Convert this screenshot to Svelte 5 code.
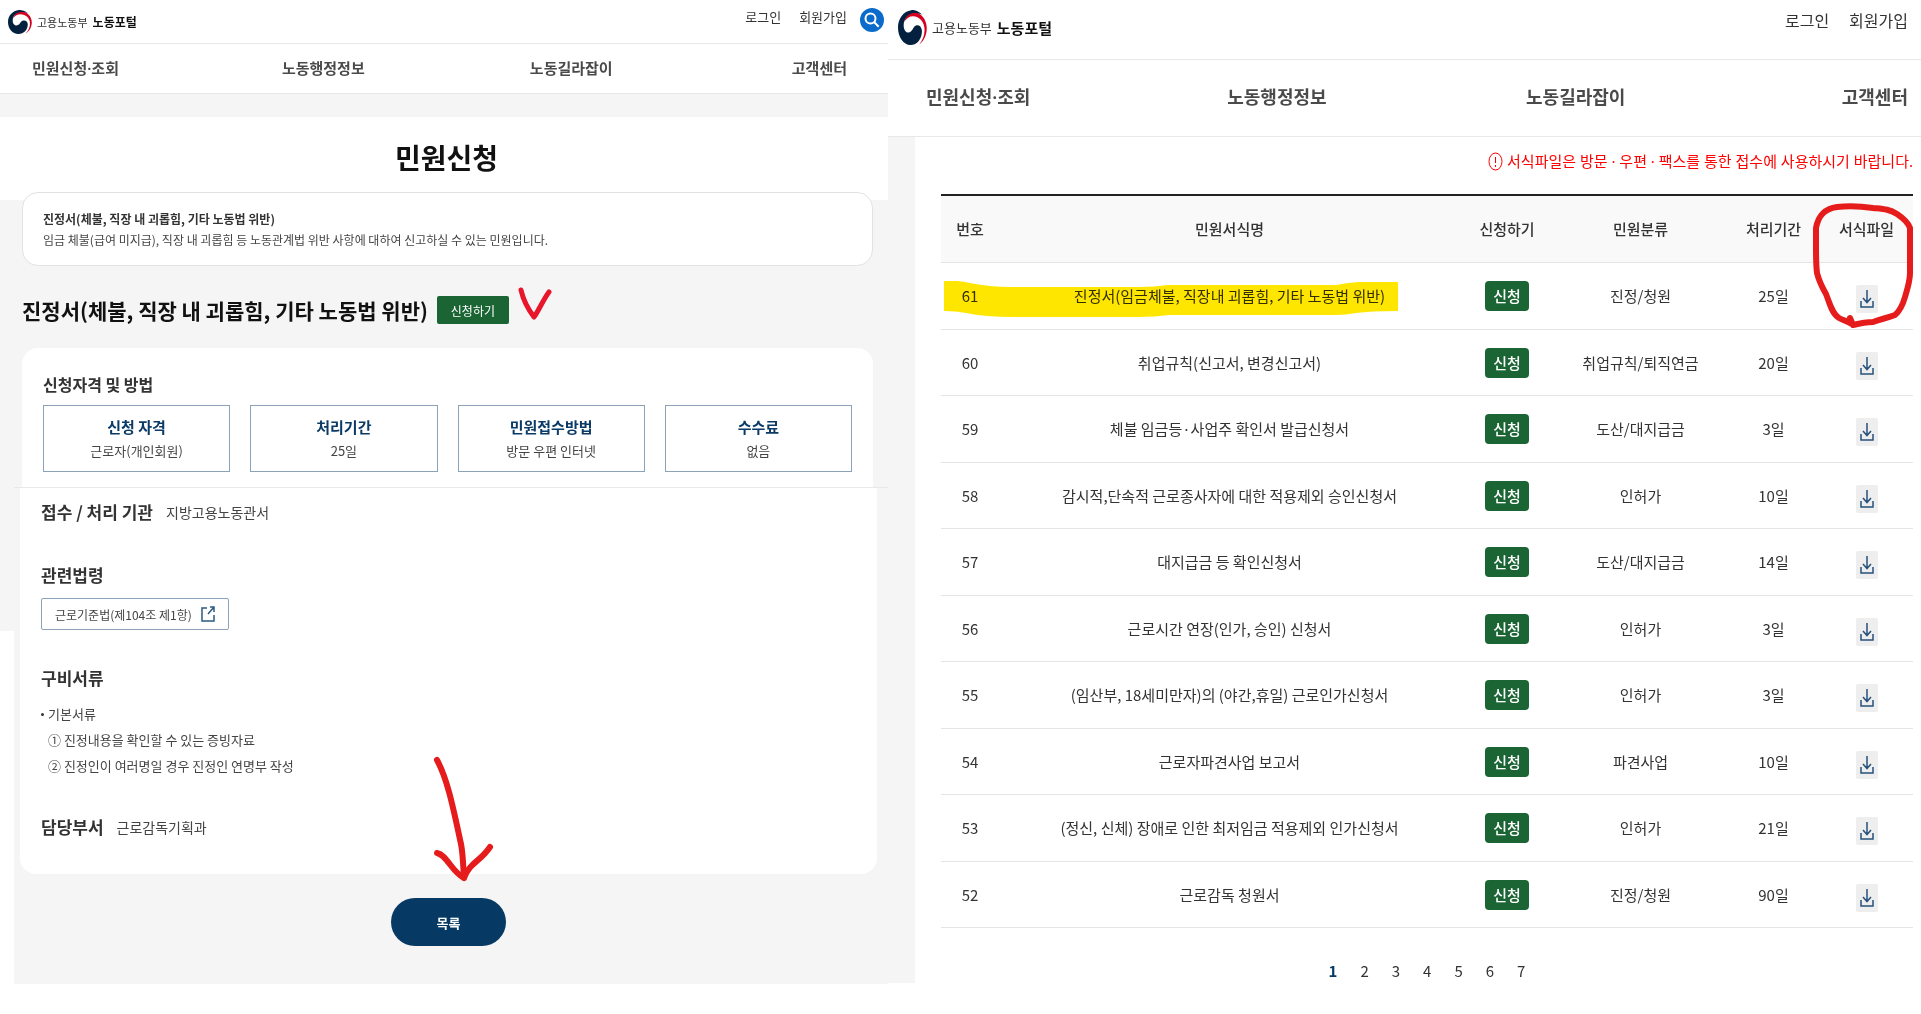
<script lang="ts">
  interface FormRow {
    no: number;
    name: string;
    category: string;
    days: string;
  }

  const menus = ['민원신청·조회', '노동행정정보', '노동길라잡이', '고객센터'];

  const conditions = [
    { label: '신청 자격', value: '근로자(개인회원)' },
    { label: '처리기간', value: '25일' },
    { label: '민원접수방법', value: '방문 우편 인터넷' },
    { label: '수수료', value: '없음' },
  ];

  const rows: FormRow[] = [
    { no: 61, name: '진정서(임금체불, 직장내 괴롭힘, 기타 노동법 위반)', category: '진정/청원', days: '25일' },
    { no: 60, name: '취업규칙(신고서, 변경신고서)', category: '취업규칙/퇴직연금', days: '20일' },
    { no: 59, name: '체불 임금등·사업주 확인서 발급신청서', category: '도산/대지급금', days: '3일' },
    { no: 58, name: '감시적,단속적 근로종사자에 대한 적용제외 승인신청서', category: '인허가', days: '10일' },
    { no: 57, name: '대지급금 등 확인신청서', category: '도산/대지급금', days: '14일' },
    { no: 56, name: '근로시간 연장(인가, 승인) 신청서', category: '인허가', days: '3일' },
    { no: 55, name: '(임산부, 18세미만자)의 (야간,휴일) 근로인가신청서', category: '인허가', days: '3일' },
    { no: 54, name: '근로자파견사업 보고서', category: '파견사업', days: '10일' },
    { no: 53, name: '(정신, 신체) 장애로 인한 최저임금 적용제외 인가신청서', category: '인허가', days: '21일' },
    { no: 52, name: '근로감독 청원서', category: '진정/청원', days: '90일' },
  ];

  const pages = [1, 2, 3, 4, 5, 6, 7];
  let page = $state(1);
</script>

{#snippet logo()}
  <a href="#home" class="logo">
    <svg class="logo-mark" viewBox="0 0 24 24" preserveAspectRatio="none" aria-hidden="true">
      <path fill="#d5001f" d="M5.2 8C6.5 4 9.5 1.6 13 1.6c6 0 10.8 4.9 10.8 10.9 0 5-2.8 9-6.2 11.1 2.7-2.8 4.4-6.1 4.4-10.1 0-5.5-4.5-9.3-9.5-9.3-3 0-5.5 1.3-7.3 3.8Z" />
      <path fill="#03203f" d="M20 3.3C17 .6 13-.1 11 .1 4.5.7 0 5.9 0 12c0 6.6 4.5 12 10.3 12 5.7 0 9.5-4.5 9.5-9.5 0-3-2.5-4.5-4.8-3.9-2.8.7-3 4.8-6.4 4.8-2.6 0-3.900-2.400-3.900-5 0-4.400 3.800-8.200 8.300-8.400 2.500-.1 5 .3 7 1.300Z" />
    </svg>
    <span class="logo-org">고용노동부</span>
    <strong class="logo-name">노동포털</strong>
  </a>
{/snippet}

{#snippet menu()}
  <nav class="menu" aria-label="주 메뉴">
    {#each menus as item}
      <a href="#menu">{item}</a>
    {/each}
  </nav>
{/snippet}

<div class="page">
  <section class="panel detail">
    <header class="top">
      {@render logo()}
      <div class="util">
        <a href="#login">로그인</a>
        <a href="#join">회원가입</a>
      </div>
      <button class="search" aria-label="검색">
        <svg viewBox="0 0 24 24" aria-hidden="true">
          <circle cx="10.5" cy="10.5" r="5" />
          <path d="m14.3 14.3 4.4 4.4" />
        </svg>
      </button>
    </header>
    {@render menu()}

    <div class="title-band">
      <h1>민원신청</h1>
    </div>

    <div class="intro">
      <strong>진정서(체불, 직장 내 괴롭힘, 기타 노동법 위반)</strong>
      <p>임금 체불(급여 미지급), 직장 내 괴롭힘 등 노동관계법 위반 사항에 대하여 신고하실 수 있는 민원입니다.</p>
    </div>

    <div class="heading">
      <h2>진정서(체불, 직장 내 괴롭힘, 기타 노동법 위반)</h2>
      <button class="apply">신청하기</button>
      <svg class="check" viewBox="0 0 36 36" aria-hidden="true">
        <path d="M4 5c2 9 7 19 13 27C21 27 26 15 32 7" />
      </svg>
    </div>

    <div class="card card-top">
      <h3>신청자격 및 방법</h3>
      <dl class="conditions">
        {#each conditions as item}
          <div>
            <dt>{item.label}</dt>
            <dd>{item.value}</dd>
          </div>
        {/each}
      </dl>
    </div>

    <div class="lower">
      <div class="card card-bottom">
        <div class="field">
          <h3>접수 / 처리 기관</h3>
          <span>지방고용노동관서</span>
        </div>

        <h3 class="law-title">관련법령</h3>
        <a href="#law" class="law">
          근로기준법(제104조 제1항)
          <svg viewBox="0 0 14 16" aria-hidden="true">
            <path d="M6 2H1v13h12V9M9 1h4v5M13 1 7 8" />
          </svg>
        </a>

        <h3 class="docs-title">구비서류</h3>
        <div class="docs">
          <p class="docs-kind">기본서류</p>
          <p>① 진정내용을 확인할 수 있는 증빙자료</p>
          <p>② 진정인이 여러명일 경우 진정인 연명부 작성</p>
        </div>

        <div class="field dept">
          <h3>담당부서</h3>
          <span>근로감독기획과</span>
        </div>
      </div>

      <div class="actions">
        <button class="list-btn">목록</button>
        <svg class="arrow" viewBox="0 0 64 128" aria-hidden="true">
          <path d="M7 6c11 20 17 52 24 84 2 10 2 20 3 34M7 99c10 2 14 18 27 25C40 108 50 108 60 93" />
        </svg>
      </div>
    </div>
  </section>

  <section class="panel forms">
    <header class="top">
      {@render logo()}
      <div class="util">
        <a href="#login">로그인</a>
        <a href="#join">회원가입</a>
      </div>
    </header>
    {@render menu()}

    <main>
      <p class="notice">
        <svg viewBox="0 0 15 19" aria-hidden="true">
          <ellipse cx="7.5" cy="9.5" rx="6.5" ry="8.5" />
          <path d="M7.5 5v6M7.5 13v2" />
        </svg>
        서식파일은 방문 · 우편 · 팩스를 통한 접수에 사용하시기 바랍니다.
      </p>

      <div class="table-wrap">
        <table>
          <colgroup>
            <col class="c-no" />
            <col />
            <col class="c-apply" />
            <col class="c-category" />
            <col class="c-days" />
            <col class="c-file" />
          </colgroup>
          <thead>
            <tr>
              <th>번호</th>
              <th>민원서식명</th>
              <th>신청하기</th>
              <th>민원분류</th>
              <th>처리기간</th>
              <th>서식파일</th>
            </tr>
          </thead>
          <tbody>
            {#each rows as row (row.no)}
              <tr>
                <td>{row.no}</td>
                <td>{row.name}</td>
                <td><button class="row-apply">신청</button></td>
                <td>{row.category}</td>
                <td>{row.days}</td>
                <td>
                  <button class="download" aria-label="{row.name} 서식파일 다운로드">
                    <svg viewBox="0 0 14 18" aria-hidden="true">
                      <path d="M7 0v12M3 8l4 4.5L11 8M1 11v6h12v-6" />
                    </svg>
                  </button>
                </td>
              </tr>
            {/each}
          </tbody>
        </table>

        <svg class="marker" viewBox="0 0 454 36" preserveAspectRatio="none" aria-hidden="true">
          <path d="M0 0q14-1 26 2 20 4 40 4h130q14 0 28-2h168q10-2 22-3h40v29q-28 0-42 2-10 2-20 2H225q-14 2-30 2H70Q40 36 22 32 12 30 0 30Z" />
        </svg>
        <svg class="loop" viewBox="0 0 104 128" aria-hidden="true">
          <path d="M41 117l3 7c8-2 12-3 20-3 8-3 14-4 22-7 6-5 8-11 10-18 3-10 5-16 5-24V27c-2-6-7-10-13-14C80 8 74 8 64 7 50 5 38 5 28 6 14 8 9 16 7 27v20c0 9 0 17 1 25 2 8 5 14 9 21 4 10 6 20 13 24 5 3 9 3 13 6" />
        </svg>
      </div>

      <nav class="pages" aria-label="페이지">
        {#each pages as n}
          <button class:current={n === page} aria-current={n === page ? 'page' : undefined} onclick={() => (page = n)}>{n}</button>
        {/each}
      </nav>
    </main>
  </section>
</div>

<style>
  :global(body) {
    margin: 0;
    background: #fff;
  }

  .page {
    display: grid;
    grid-template-columns: 888fr 1033fr;
    align-items: start;
    font-family: 'Noto Sans CJK KR', 'Noto Sans', sans-serif;
    color: #333;
  }

  h1, h2, h3, p, dl, dd {
    margin: 0;
  }

  a {
    color: inherit;
    text-decoration: none;
  }

  button {
    padding: 0;
    border: 0;
    background: none;
    font: inherit;
    color: inherit;
    cursor: pointer;
  }

  .panel {
    min-width: 0;
    white-space: nowrap;
  }

  /* Header */

  .top {
    display: flex;
    box-sizing: border-box;
    height: 44px;
    padding: 0 4px 0 8px;
    border-bottom: 1px solid #e8e8e8;
    background: #fff;
  }

  .logo {
    display: flex;
    align-items: center;
    height: 43px;
    gap: 5px;
    font-size: 11px;
  }

  .logo-mark {
    width: 24px;
    height: 24px;
  }

  .logo-name {
    font-size: 12px;
    color: #111;
  }

  .util {
    display: flex;
    gap: 18px;
    margin-left: auto;
    font-size: 13px;
    line-height: 20px;
    padding-top: 7px;
  }

  .search {
    width: 24px;
    height: 24px;
    margin: 8px 0 0 13px;
    border-radius: 50%;
    background: #0a6bcb;
  }

  .search svg {
    display: block;
    fill: none;
    stroke: #fff;
    stroke-width: 2;
  }

  /* Noto Sans goes first for its narrow middle dot */
  .menu,
  .notice {
    font-family: 'Noto Sans', 'Noto Sans CJK KR', sans-serif;
  }

  .menu {
    display: grid;
    grid-template-columns: 250fr 248fr 262fr auto;
    align-items: center;
    box-sizing: border-box;
    height: 50px;
    padding: 0 41px 2px 32px;
    border-bottom: 1px solid #e8e8e8;
    background: #fff;
    font-size: 15px;
    font-weight: 600;
    line-height: 24px;
    color: #4a4a4a;
  }

  /* Detail panel */

  .detail {
    background: #f5f5f5;
  }

  .title-band {
    display: flex;
    justify-content: center;
    height: 83px;
    margin-top: 23px;
    padding-left: 5px;
    background: #fff;
  }

  h1 {
    font-size: 28px;
    line-height: 80px;
    color: #111;
  }

  .intro {
    margin: -8px 15px 0 22px;
    padding: 15px 20px;
    border: 1px solid #e2e2e2;
    border-radius: 16px;
    background: #fff;
    font-size: 12px;
    line-height: 21px;
    color: #444;
  }

  .intro strong {
    color: #333;
  }

  .heading {
    display: flex;
    align-items: center;
    height: 82px;
    padding: 6px 22px 0;
    box-sizing: border-box;
  }

  h2 {
    font-size: 21px;
    line-height: 30px;
    color: #111;
  }

  .apply {
    width: 72px;
    height: 28px;
    margin: 0 8px 0 9px;
    border-radius: 2px;
    background: #1b6535;
    font-size: 12px;
    color: #fff;
  }

  .check {
    width: 36px;
    height: 36px;
    margin-bottom: 14px;
    fill: none;
    stroke: #e8152b;
    stroke-width: 5;
    stroke-linecap: round;
    stroke-linejoin: round;
  }

  .card {
    background: #fff;
  }

  .card-top {
    margin: 0 15px 0 22px;
    padding: 24px 21px 15px;
    border-radius: 16px 16px 0 0;
  }

  .card-top h3 {
    font-size: 16px;
    line-height: 24px;
  }

  .conditions {
    display: grid;
    grid-template-columns: repeat(4, 1fr);
    gap: 20px;
    padding-top: 9px;
  }

  .conditions div {
    padding: 8px 0;
    border: 1px solid #8ba2b8;
    text-align: center;
  }

  .conditions dt {
    font-size: 15px;
    font-weight: 700;
    line-height: 25px;
    color: #0b3a66;
  }

  .conditions dd {
    font-size: 13px;
    line-height: 24px;
    color: #444;
  }

  /* the grey backdrop narrows beside the lower card */
  .lower {
    padding: 1px 11px 38px 20px;
    background:
      linear-gradient(#e8e8e8, #e8e8e8) 14px 0 / 100% 1px no-repeat,
      linear-gradient(#fff, #fff) 0 100% / 14px calc(100% - 144px) no-repeat #f5f5f5;
  }

  .card-bottom {
    padding: 11px 21px 34px;
    border-radius: 0 0 16px 16px;
    font-size: 14px;
    color: #444;
  }

  .card-bottom h3 {
    font-size: 17px;
    line-height: 26px;
    color: #333;
  }

  .field {
    display: flex;
    align-items: center;
    gap: 13px;
  }

  .card-bottom .law-title {
    margin: 37px 0 10px;
  }

  .law {
    display: inline-flex;
    align-items: center;
    gap: 9px;
    height: 30px;
    padding: 0 13px;
    border: 1px solid #8ba2b8;
    border-radius: 2px;
    font-size: 12px;
  }

  .law svg {
    width: 14px;
    height: 16px;
    fill: none;
    stroke: #2e5b84;
    stroke-width: 1.5;
  }

  .card-bottom .docs-title {
    margin: 35px 0 10px;
  }

  .docs {
    padding-left: 7px;
    font-size: 13px;
    line-height: 26px;
  }

  .docs-kind {
    display: flex;
    align-items: center;
    gap: 4px;
    margin-left: -7px;
  }

  .docs-kind::before {
    content: '';
    width: 3px;
    height: 3px;
    border-radius: 50%;
    background: #333;
  }

  .dept {
    margin-top: 35px;
  }

  .actions {
    position: relative;
    display: flex;
    justify-content: center;
    padding-top: 24px;
  }

  .list-btn {
    width: 115px;
    height: 48px;
    border-radius: 24px;
    background: #063963;
    font-size: 13px;
    font-weight: 700;
    color: #fff;
  }

  .arrow {
    position: absolute;
    left: 50%;
    bottom: 64px;
    width: 64px;
    height: 128px;
    margin-left: -19px;
    fill: none;
    stroke: #e61c1c;
    stroke-width: 6;
    stroke-linecap: round;
    stroke-linejoin: round;
  }

  /* Forms panel */

  .forms .top {
    height: 60px;
    padding: 0 13px 0 10px;
  }

  .forms .logo {
    height: 55px;
    gap: 5px;
    font-size: 13px;
  }

  .forms .logo-mark {
    width: 29px;
    height: 35px;
  }

  .forms .logo-name {
    font-size: 15px;
  }

  .forms .util {
    gap: 20px;
    font-size: 16px;
    line-height: 26px;
  }

  .forms .menu {
    height: 77px;
    padding: 0 13px 2px 38px;
    font-size: 18px;
  }

  main {
    padding: 12px 8px 0 26px;
    border-left: 27px solid #f5f5f5;
  }

  .notice {
    display: flex;
    justify-content: flex-end;
    align-items: center;
    gap: 4px;
    font-size: 15px;
    line-height: 24px;
    color: #f00;
  }

  .notice svg {
    width: 15px;
    height: 19px;
    fill: none;
    stroke: #f00;
  }

  .table-wrap {
    position: relative;
    margin-top: 21px;
  }

  table {
    width: 100%;
    table-layout: fixed;
    border-collapse: separate;
    border-spacing: 0;
    font-size: 15px;
    line-height: 24px;
    text-align: center;
  }

  .c-no { width: 58px; }
  .c-apply { width: 94px; }
  .c-category { width: 173px; }
  .c-days { width: 93px; }
  .c-file { width: 93px; }

  th,
  td {
    box-sizing: border-box;
    height: 66px;
    padding: 0;
    border-bottom: 1px solid #e5e5e5;
  }

  tbody tr:nth-child(odd) td {
    height: 67px;
  }

  th {
    height: 69px;
    border-top: 2px solid #222;
    background: #f9f9f9;
    font-weight: 500;
  }

  .row-apply {
    width: 44px;
    height: 30px;
    border-radius: 4px;
    background: #1b6535;
    font-weight: 500;
    color: #fff;
  }

  .download {
    display: block;
    width: 22px;
    height: 28px;
    margin: 6px auto 0;
    border-radius: 2px;
    background: #eee;
  }

  .download svg {
    display: block;
    width: 14px;
    height: 18px;
    margin: 0 auto;
    fill: none;
    stroke: #27527c;
    stroke-width: 1.5;
  }

  .marker {
    position: absolute;
    top: 87px;
    left: 3px;
    width: 454px;
    height: 36px;
    fill: #ffe600;
    mix-blend-mode: multiply;
    pointer-events: none;
  }

  .loop {
    position: absolute;
    top: 7px;
    right: 0;
    width: 104px;
    height: 128px;
    fill: none;
    stroke: #e61c1c;
    stroke-width: 6;
    stroke-linecap: round;
    stroke-linejoin: round;
    pointer-events: none;
  }

  .pages {
    display: flex;
    justify-content: center;
    gap: 23px;
    margin-top: 31px;
    font-size: 15px;
    line-height: 24px;
  }

  .current {
    font-weight: 700;
    color: #063963;
  }
</style>
